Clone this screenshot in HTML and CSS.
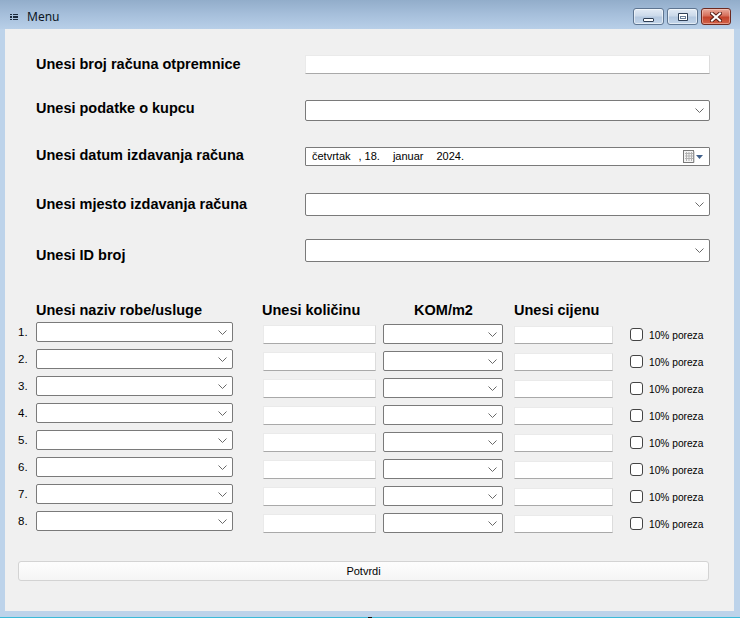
FILE: index.html
```html
<!DOCTYPE html>
<html lang="hr">
<head>
<meta charset="utf-8">
<title>Menu</title>
<link rel="stylesheet" href="styles.css">
</head>
<body>
<div class="window">
  <div class="titlebar">
    <svg class="app-icon" width="8" height="6" viewBox="0 0 8 6">
      <rect x="0" y="0" width="2" height="1" fill="#1b2a3c"/><rect x="3" y="0" width="5" height="1" fill="#1b2a3c"/>
      <rect x="0" y="2" width="2" height="2" fill="#1b2a3c"/><rect x="3" y="2" width="5" height="2" fill="#1b2a3c"/>
      <rect x="0" y="5" width="2" height="1" fill="#1b2a3c"/><rect x="3" y="5" width="5" height="1" fill="#1b2a3c"/>
    </svg>
    <span class="title">Menu</span>
    <div class="caption-buttons">
      <div class="cbtn cbtn-min"><span class="min-glyph"></span></div>
      <div class="cbtn cbtn-max"><span class="max-glyph"><span class="max-inner"></span></span></div>
      <div class="cbtn cbtn-close">
        <svg width="12" height="10" viewBox="0 0 12 10">
          <path d="M2 1.5 L10 8.5 M10 1.5 L2 8.5" stroke="#5a1f16" stroke-width="4" stroke-linecap="square"/>
          <path d="M2 1.5 L10 8.5 M10 1.5 L2 8.5" stroke="#ffffff" stroke-width="2" stroke-linecap="square"/>
        </svg>
      </div>
    </div>
  </div>

  <div class="client">
    <div class="form-row row-1">
      <span class="form-label">Unesi broj računa otpremnice</span>
      <div class="textbox control-wide"></div>
    </div>
    <div class="form-row row-2">
      <span class="form-label">Unesi podatke o kupcu</span>
      <div class="combo control-wide h21"><svg class="chev" width="9" height="5" viewBox="0 0 9 5"><polyline points="0.5,0.5 4.5,4.5 8.5,0.5" fill="none" stroke="#6a6a6a" stroke-width="1"/></svg></div>
    </div>
    <div class="form-row row-3">
      <span class="form-label">Unesi datum izdavanja računa</span>
      <div class="datepicker control-wide">
        <span class="date-text"><span>četvrtak</span><span class="d-comma">,</span><span class="d-day">18.</span><span class="d-month">januar</span><span class="d-year">2024.</span></span>
        <svg class="cal-icon" width="21" height="13" viewBox="0 0 21 13">
          <rect x="0.5" y="0.5" width="10" height="12" fill="#f4f4f4" stroke="#7a7a7a"/>
          <path d="M2 3.5 H10 M2 6 H10 M2 8.5 H10 M3.5 2 V11 M6 2 V11 M8.5 2 V11" stroke="#b3b3b3" stroke-width="1"/>
          <rect x="10.5" y="1.5" width="1" height="11" fill="#b0b0b0"/>
          <polygon points="13,5 20,5 16.5,9" fill="#3f5f8a"/>
        </svg>
      </div>
    </div>
    <div class="form-row row-4">
      <span class="form-label">Unesi mjesto izdavanja računa</span>
      <div class="combo control-wide h23"><svg class="chev" width="9" height="5" viewBox="0 0 9 5"><polyline points="0.5,0.5 4.5,4.5 8.5,0.5" fill="none" stroke="#6a6a6a" stroke-width="1"/></svg></div>
    </div>
    <div class="form-row row-5">
      <span class="form-label">Unesi ID broj</span>
      <div class="combo control-wide h23"><svg class="chev" width="9" height="5" viewBox="0 0 9 5"><polyline points="0.5,0.5 4.5,4.5 8.5,0.5" fill="none" stroke="#6a6a6a" stroke-width="1"/></svg></div>
    </div>

    <div class="table-head">
      <span class="th th-name">Unesi naziv robe/usluge</span>
      <span class="th th-qty">Unesi količinu</span>
      <span class="th th-unit">KOM/m2</span>
      <span class="th th-price">Unesi cijenu</span>
    </div>

    <div class="items">
      <div class="item-row"><span class="num">1.</span><div class="combo c-name"><svg class="chev" width="9" height="5" viewBox="0 0 9 5"><polyline points="0.5,0.5 4.5,4.5 8.5,0.5" fill="none" stroke="#6a6a6a"/></svg></div><div class="textbox c-qty"></div><div class="combo c-unit"><svg class="chev" width="9" height="5" viewBox="0 0 9 5"><polyline points="0.5,0.5 4.5,4.5 8.5,0.5" fill="none" stroke="#6a6a6a"/></svg></div><div class="textbox c-price"></div><span class="checkbox"></span><span class="chk-label">10% poreza</span></div>
      <div class="item-row"><span class="num">2.</span><div class="combo c-name"><svg class="chev" width="9" height="5" viewBox="0 0 9 5"><polyline points="0.5,0.5 4.5,4.5 8.5,0.5" fill="none" stroke="#6a6a6a"/></svg></div><div class="textbox c-qty"></div><div class="combo c-unit"><svg class="chev" width="9" height="5" viewBox="0 0 9 5"><polyline points="0.5,0.5 4.5,4.5 8.5,0.5" fill="none" stroke="#6a6a6a"/></svg></div><div class="textbox c-price"></div><span class="checkbox"></span><span class="chk-label">10% poreza</span></div>
      <div class="item-row"><span class="num">3.</span><div class="combo c-name"><svg class="chev" width="9" height="5" viewBox="0 0 9 5"><polyline points="0.5,0.5 4.5,4.5 8.5,0.5" fill="none" stroke="#6a6a6a"/></svg></div><div class="textbox c-qty"></div><div class="combo c-unit"><svg class="chev" width="9" height="5" viewBox="0 0 9 5"><polyline points="0.5,0.5 4.5,4.5 8.5,0.5" fill="none" stroke="#6a6a6a"/></svg></div><div class="textbox c-price"></div><span class="checkbox"></span><span class="chk-label">10% poreza</span></div>
      <div class="item-row"><span class="num">4.</span><div class="combo c-name"><svg class="chev" width="9" height="5" viewBox="0 0 9 5"><polyline points="0.5,0.5 4.5,4.5 8.5,0.5" fill="none" stroke="#6a6a6a"/></svg></div><div class="textbox c-qty"></div><div class="combo c-unit"><svg class="chev" width="9" height="5" viewBox="0 0 9 5"><polyline points="0.5,0.5 4.5,4.5 8.5,0.5" fill="none" stroke="#6a6a6a"/></svg></div><div class="textbox c-price"></div><span class="checkbox"></span><span class="chk-label">10% poreza</span></div>
      <div class="item-row"><span class="num">5.</span><div class="combo c-name"><svg class="chev" width="9" height="5" viewBox="0 0 9 5"><polyline points="0.5,0.5 4.5,4.5 8.5,0.5" fill="none" stroke="#6a6a6a"/></svg></div><div class="textbox c-qty"></div><div class="combo c-unit"><svg class="chev" width="9" height="5" viewBox="0 0 9 5"><polyline points="0.5,0.5 4.5,4.5 8.5,0.5" fill="none" stroke="#6a6a6a"/></svg></div><div class="textbox c-price"></div><span class="checkbox"></span><span class="chk-label">10% poreza</span></div>
      <div class="item-row"><span class="num">6.</span><div class="combo c-name"><svg class="chev" width="9" height="5" viewBox="0 0 9 5"><polyline points="0.5,0.5 4.5,4.5 8.5,0.5" fill="none" stroke="#6a6a6a"/></svg></div><div class="textbox c-qty"></div><div class="combo c-unit"><svg class="chev" width="9" height="5" viewBox="0 0 9 5"><polyline points="0.5,0.5 4.5,4.5 8.5,0.5" fill="none" stroke="#6a6a6a"/></svg></div><div class="textbox c-price"></div><span class="checkbox"></span><span class="chk-label">10% poreza</span></div>
      <div class="item-row"><span class="num">7.</span><div class="combo c-name"><svg class="chev" width="9" height="5" viewBox="0 0 9 5"><polyline points="0.5,0.5 4.5,4.5 8.5,0.5" fill="none" stroke="#6a6a6a"/></svg></div><div class="textbox c-qty"></div><div class="combo c-unit"><svg class="chev" width="9" height="5" viewBox="0 0 9 5"><polyline points="0.5,0.5 4.5,4.5 8.5,0.5" fill="none" stroke="#6a6a6a"/></svg></div><div class="textbox c-price"></div><span class="checkbox"></span><span class="chk-label">10% poreza</span></div>
      <div class="item-row"><span class="num">8.</span><div class="combo c-name"><svg class="chev" width="9" height="5" viewBox="0 0 9 5"><polyline points="0.5,0.5 4.5,4.5 8.5,0.5" fill="none" stroke="#6a6a6a"/></svg></div><div class="textbox c-qty"></div><div class="combo c-unit"><svg class="chev" width="9" height="5" viewBox="0 0 9 5"><polyline points="0.5,0.5 4.5,4.5 8.5,0.5" fill="none" stroke="#6a6a6a"/></svg></div><div class="textbox c-price"></div><span class="checkbox"></span><span class="chk-label">10% poreza</span></div>
    </div>

    <div class="confirm">Potvrdi</div>
  </div>
  <div class="frame-bottom"></div>
  <div class="screen-edge"><span class="edge-mark"></span></div>
</div>
</body>
</html>
```

FILE: styles.css
```css
* { box-sizing: border-box; }
html, body { margin: 0; padding: 0; }
body {
  width: 740px;
  height: 618px;
  overflow: hidden;
  background: #bdd3ea;
  font-family: "Liberation Sans", Arial, sans-serif;
  color: #000;
}
.window {
  width: 740px;
  height: 618px;
  display: flex;
  flex-direction: column;
  background: #bdd3ea;
}
.titlebar {
  height: 29px;
  flex: none;
  display: flex;
  align-items: flex-start;
  padding-left: 10px;
  background: linear-gradient(#92adca 0%, #a6bfdb 50%, #b8cfe8 100%);
}
.app-icon { margin-top: 14px; flex: none; }
.title {
  font-family: "Noto Sans", "Open Sans", sans-serif;
  font-size: 12px;
  line-height: 16px;
  margin-top: 9px;
  margin-left: 9px;
  color: #0c1624;
}
.caption-buttons {
  margin-left: auto;
  margin-top: 8px;
  margin-right: 9px;
  display: flex;
  gap: 3px;
}
.cbtn {
  width: 31px;
  height: 17px;
  border: 1px solid #5e7591;
  border-radius: 3px;
  display: flex;
  align-items: center;
  justify-content: center;
  box-shadow: inset 0 0 0 1px rgba(255,255,255,0.55);
  background: linear-gradient(#e3ebf5 0%, #cbd9ea 45%, #b4c8e0 55%, #c3d5ea 100%);
}
.cbtn-close {
  width: 30px;
  border-color: #6d2a20;
  background: linear-gradient(#e9ab9c 0%, #d66f5a 45%, #c3432b 55%, #d2634a 100%);
  box-shadow: inset 0 0 0 1px rgba(255,220,210,0.45);
}
.min-glyph {
  width: 11px;
  height: 4px;
  margin-top: 6px;
  background: #fff;
  border: 1px solid #2e3e55;
  border-radius: 1px;
}
.max-glyph {
  width: 10px;
  height: 8px;
  background: #2e3e55;
  border-radius: 1px;
  padding: 1px;
  display: flex;
}
.max-inner {
  flex: 1;
  background: #fff;
  border-top: 1px solid #fff;
  box-shadow: inset 0 0 0 1px #fff, inset 0 0 0 2px #6b7f99;
}

.client {
  flex: none;
  height: 582px;
  margin-left: 5px;
  margin-right: 6px;
  background: #f0f0f0;
  padding-top: 26px;
}

.form-row {
  display: flex;
  align-items: flex-start;
  padding-left: 31px;
}
.form-label {
  width: 269px;
  font-weight: bold;
  font-size: 14.5px;
  line-height: 16px;
  white-space: nowrap;
}
.row-1 .form-label { margin-top: 1px; }
.row-4 .form-label { margin-top: 3px; }
.row-5 .form-label { margin-top: 8px; }
.row-2 { margin-top: 26px; }
.row-3 { margin-top: 26px; }
.row-4 { margin-top: 27px; }
.row-5 { margin-top: 23px; height: 23px; }
.control-wide { width: 405px; }

.textbox {
  height: 19px;
  background: #fff;
  border: 1px solid #eaeaea;
  border-bottom-color: #a9a9a9;
  border-right-color: #dcdcdc;
}
.combo {
  height: 20px;
  background: #fff;
  border: 1px solid #7a7a7a;
  border-radius: 2px;
  display: flex;
  align-items: center;
  justify-content: flex-end;
  padding-right: 5px;
}
.combo.h21 { height: 21px; }
.combo.h23 { height: 23px; }
.chev { display: block; }

.datepicker {
  height: 19px;
  background: #fff;
  border: 1px solid #7a7a7a;
  border-radius: 1px;
  display: flex;
  align-items: center;
  padding-left: 6px;
  padding-right: 5px;
}
.date-text {
  font-size: 11px;
  line-height: 13px;
  display: flex;
  white-space: nowrap;
}
.d-comma { margin-left: 8px; }
.d-day { margin-left: 3px; }
.d-month { margin-left: 13px; }
.d-year { margin-left: 13px; }
.cal-icon { margin-left: auto; display: block; }

.table-head {
  margin-top: 40px;
  height: 20px;
  display: flex;
  align-items: flex-start;
  font-weight: bold;
  font-size: 14.5px;
  line-height: 16px;
  white-space: nowrap;
}
.th-name { margin-left: 31px; width: 226px; }
.th-qty { width: 121px; }
.th-unit { width: 131px; text-align: center; padding-right: 10px; }

.items { display: flex; flex-direction: column; }
.item-row {
  height: 27px;
  display: flex;
  align-items: flex-start;
}
.num {
  width: 31px;
  padding-left: 13px;
  font-size: 11.5px;
  line-height: 20px;
  color: #000;
}
.c-name { width: 197px; }
.c-qty { width: 113px; margin-left: 30px; margin-top: 3px; }
.c-unit { width: 120px; margin-left: 7px; margin-top: 2px; }
.c-price { width: 99px; margin-left: 11px; margin-top: 4px; height: 18px; }
.checkbox {
  width: 13px;
  height: 13px;
  margin-left: 17px;
  margin-top: 6px;
  border: 1px solid #444;
  border-radius: 3px;
  background: #fff;
}
.chk-label {
  margin-left: 6px;
  margin-top: 7px;
  font-size: 10.2px;
  line-height: 13px;
  white-space: nowrap;
}

.confirm {
  margin-top: 23px;
  margin-left: 13px;
  width: 691px;
  height: 20px;
  border: 1px solid #d3d3d3;
  border-radius: 3px;
  background: linear-gradient(#fdfdfd, #f5f5f5);
  font-size: 11px;
  line-height: 18px;
  text-align: center;
}

.frame-bottom { flex: none; height: 6px; }
.screen-edge {
  flex: none;
  height: 1px;
  background: #3cbad8;
  display: flex;
  padding-left: 368px;
}
.edge-mark { width: 4px; height: 1px; background: #111; }
```
